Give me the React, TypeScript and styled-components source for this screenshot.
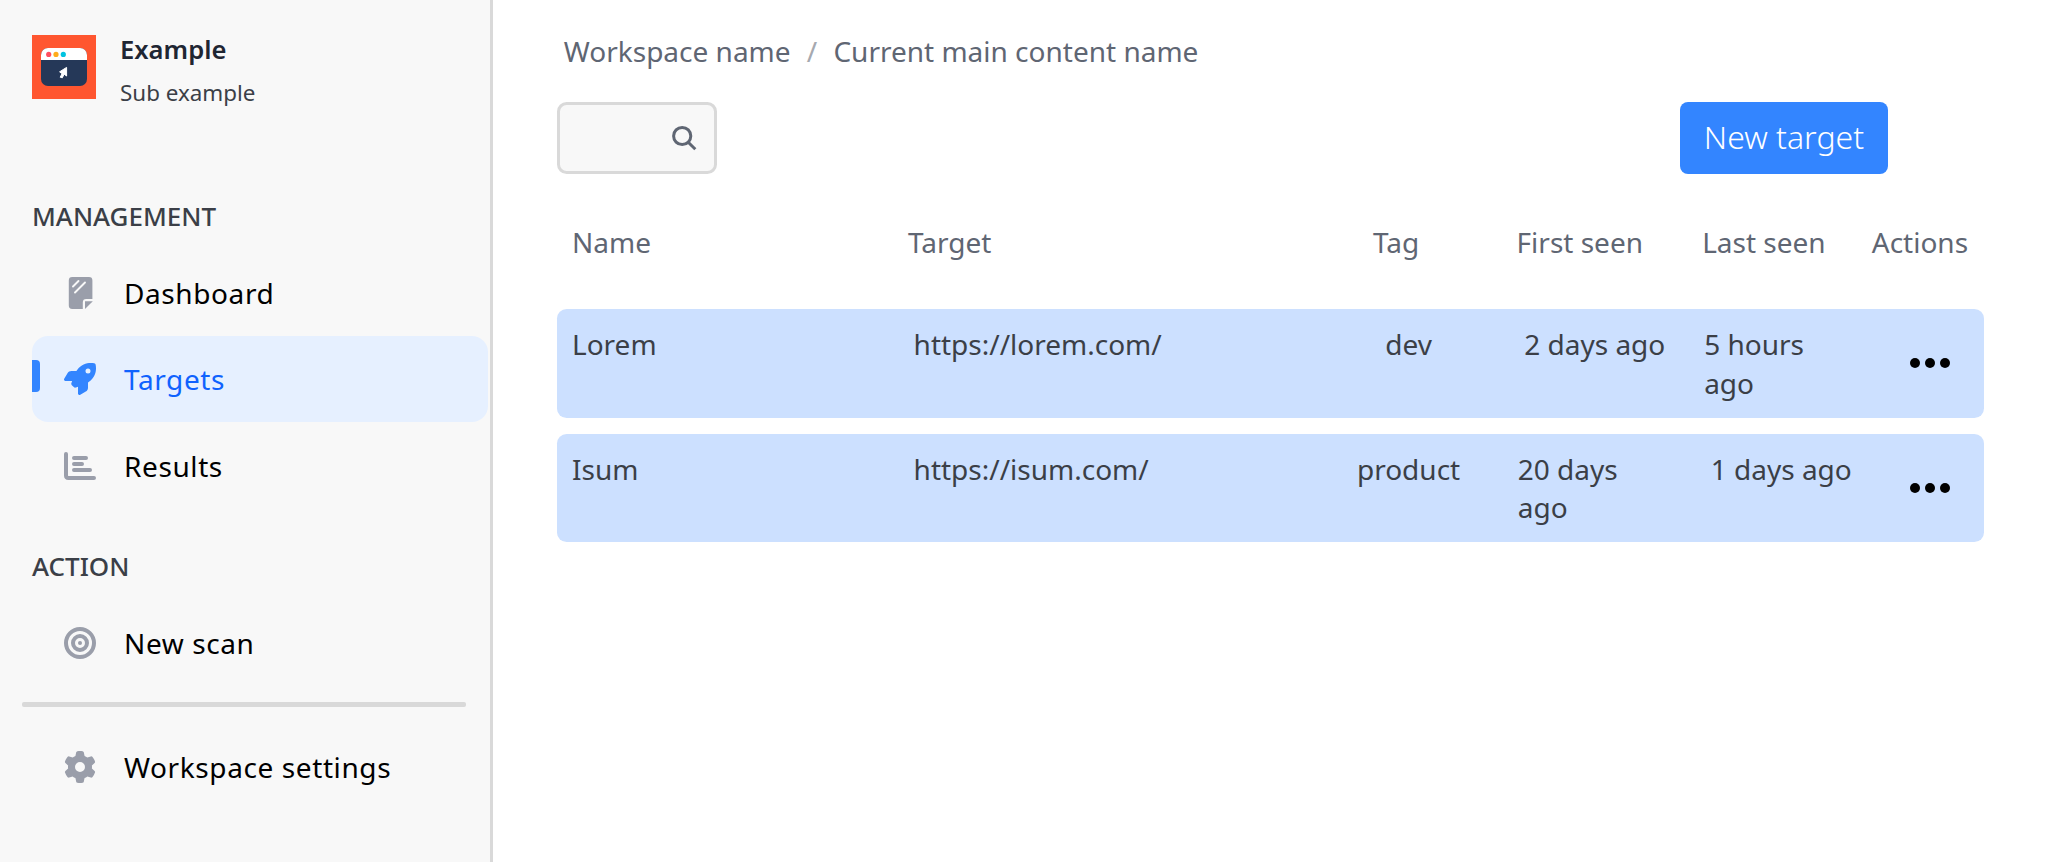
import React from "react";
import styled, { createGlobalStyle, css } from "styled-components";
import { FaRocket, FaGear } from "react-icons/fa6";

const GlobalStyle = createGlobalStyle`
  *, *::before, *::after { box-sizing: border-box; }
  body {
    margin: 0;
    background: #fff;
    font-family: "Noto Sans", sans-serif;
    overflow: hidden;
  }
`;

const Page = styled.div`
  display: flex;
  width: 100%;
  height: 100vh;
  background: #fff;
`;

const Sidebar = styled.aside`
  display: flex;
  flex-direction: column;
  flex: none;
  width: 492.8px;
  padding-top: 35.2px;
  background: #f8f8f8;
  border-right: 3.2px solid #d9d9d9;
`;

const Brand = styled.header`
  display: flex;
  gap: 24px;
  height: 123.2px;
  padding-left: 32px;
`;

const BrandText = styled.div`
  padding-top: 0;
`;

const BrandName = styled.div`
  font-size: 25.6px;
  line-height: 30px;
  font-weight: 600;
  color: #1f2633;
`;

const BrandSub = styled.div`
  margin-top: 13px;
  font-size: 22.4px;
  line-height: 30px;
  color: #3b3f47;
`;

const SectionTitle = styled.h2`
  display: flex;
  align-items: center;
  height: 91.2px;
  margin: 0;
  padding: 24.9px 0 0 32px;
  font-size: 26px;
  line-height: 35px;
  font-weight: 500;
  color: #3b3f47;
`;

const NavItem = styled.a<{ $active?: boolean }>`
  display: flex;
  align-items: center;
  gap: 28px;
  height: 86.4px;
  margin: 0 1.6px 0 32px;
  padding-left: 32px;
  border-radius: 16px;
  font-size: 28px;
  letter-spacing: 0.6px;
  color: #000;
  svg { flex: none; color: #9a9eaa; }
  ${(p) =>
    p.$active &&
    css`
      padding-left: 0;
      background: #e6f0ff;
      color: #0f62fe;
      svg { color: #3385ff; }
    `}
`;

const ActiveMark = styled.span`
  width: 8px;
  height: 32px;
  margin: 0 -4px 6px 0;
  border-radius: 0 4px 4px 0;
  background: #3385ff;
`;

const Divider = styled.hr`
  width: 443.2px;
  height: 5px;
  margin: 15.6px 0 16.8px 22.4px;
  border: 0;
  border-radius: 2px;
  background: #d9d9d9;
`;

const Main = styled.main`
  flex: 1;
  padding: 32px 64px 0 64px;
`;

const Breadcrumb = styled.nav`
  display: flex;
  gap: 16.2px;
  padding-left: 7px;
  font-size: 28px;
  line-height: 39.2px;
  color: #5f6673;
`;

const Slash = styled.span`
  color: #a6a9b0;
`;

const Toolbar = styled.div`
  display: flex;
  justify-content: space-between;
  margin-top: 31.2px;
  padding-right: 96px;
`;

const SearchBox = styled.div`
  display: flex;
  align-items: center;
  justify-content: flex-end;
  width: 160px;
  height: 72px;
  padding: 0 16.6px 0 0;
  border: 3.2px solid #d9d9d9;
  border-radius: 9.6px;
  background: #f8f8f8;
  color: #5f6673;
`;

const PrimaryButton = styled.button`
  width: 208px;
  height: 72px;
  padding: 0 0 2.6px;
  border: 0;
  border-radius: 8px;
  background: #3385ff;
  color: #fff;
  font: 300 32px/43.6px "Noto Sans", sans-serif;
`;

const HeaderRow = styled.div`
  display: grid;
  grid-template-columns: 336px 465px 143.6px 185.6px 169.6px auto;
  margin-top: 48.2px;
  padding-left: 15.2px;
  height: 86.2px;
  font-size: 28px;
  line-height: 39.2px;
  color: #5f6673;
`;

const TableRow = styled.div`
  display: grid;
  grid-template-columns: 341.6px 417px 156px 31.2px 154px 32.4px 154.2px 50.4px auto;
  height: 108.8px;
  margin-bottom: 16px;
  padding: 16px 0 0 15.2px;
  border-radius: 9.6px;
  background: #cce0ff;
  font-size: 28px;
  line-height: 38.8px;
  color: #3b3f47;
`;

const Cell = styled.div<{ $column?: number; $centered?: boolean }>`
  grid-column: ${(p) => p.$column ?? "auto"};
  display: flex;
  justify-content: ${(p) => (p.$centered ? "center" : "flex-start")};
`;

const MenuCell = styled.div`
  grid-column: 9;
  height: 76.8px;
  display: flex;
  align-items: center;
`;

const Logo = () => (
  <svg width="64" height="64" viewBox="0 0 64 64">
    <rect width="64" height="64" fill="#ff5630" />
    <rect x="9" y="13" width="46" height="38" rx="7" fill="#253858" />
    <path d="M9 25V20a7 7 0 0 1 7-7H48a7 7 0 0 1 7 7V25Z" fill="#fff" />
    <circle cx="16.7" cy="19.4" r="2.6" fill="#ff4f5e" />
    <circle cx="24" cy="19.4" r="2.6" fill="#ffab1a" />
    <circle cx="31.3" cy="19.4" r="2.6" fill="#00c3e0" />
    <path
      d="M34.6 32.4 27.6 36.8 29.5 38.4 30.2 38.4 28.2 42.2 30.3 42.8 32.1 39.2 34.6 41Z"
      fill="#fff"
      stroke="#fff"
      strokeWidth="1"
      strokeLinejoin="round"
    />
  </svg>
);

const DashboardIcon = () => (
  <svg width="32" height="32" viewBox="0 0 32 32">
    <path
      d="M8 0H25a3.4 3.4 0 0 1 3.4 3.4V22H22.2a3.4 3.4 0 0 0-3.4 3.4V32H8.2A3.4 3.4 0 0 1 4.8 28.6V3.4A3.4 3.4 0 0 1 8.2 0Z"
      fill="currentColor"
    />
    <path d="M21 24.2H28.8L21 32Z" fill="currentColor" />
    <path d="M9 9.5 14.5 4M11 15.5 21 5.5" stroke="#f8f8f8" strokeWidth="1.9" strokeLinecap="round" />
  </svg>
);

const ResultsIcon = () => (
  <svg width="32" height="32" viewBox="0 0 32 32" fill="none" stroke="currentColor" strokeWidth="4" strokeLinecap="round">
    <path d="M2 4V25.6Q2 28 4.4 28H30" />
    <path d="M10 8H22M10 14H18M10 20H26" />
  </svg>
);

const ScanIcon = () => (
  <svg width="32" height="32" viewBox="0 0 32 32" fill="none" stroke="currentColor" strokeWidth="4">
    <circle cx="16" cy="16" r="14" />
    <circle cx="16" cy="16" r="7" />
    <circle cx="16" cy="16" r="2" fill="currentColor" stroke="none" />
  </svg>
);

const SearchIcon = () => (
  <svg width="26" height="26" viewBox="0 0 26 26" fill="none" stroke="currentColor" strokeWidth="3">
    <circle cx="11.2" cy="11" r="8.6" />
    <path d="M17 17 24.3 24.3" />
  </svg>
);

const MoreIcon = () => (
  <svg width="42" height="12" viewBox="0 0 42 12">
    <circle cx="6" cy="6" r="5" />
    <circle cx="21" cy="6" r="5" />
    <circle cx="36" cy="6" r="5" />
  </svg>
);

const targets = [
  { name: "Lorem", url: "https://lorem.com/", tag: "dev", first: "2 days ago", last: "5 hours ago" },
  { name: "Isum", url: "https://isum.com/", tag: "product", first: "20 days ago", last: "1 days ago" },
];

export default function App() {
  return (
    <>
      <GlobalStyle />
      <Page>
        <Sidebar>
          <Brand>
            <Logo />
            <BrandText>
              <BrandName>Example</BrandName>
              <BrandSub>Sub example</BrandSub>
            </BrandText>
          </Brand>
          <SectionTitle>MANAGEMENT</SectionTitle>
          <NavItem>
            <DashboardIcon />
            <span>Dashboard</span>
          </NavItem>
          <NavItem $active>
            <ActiveMark />
            <FaRocket size={32} />
            <span>Targets</span>
          </NavItem>
          <NavItem>
            <ResultsIcon />
            <span>Results</span>
          </NavItem>
          <SectionTitle>ACTION</SectionTitle>
          <NavItem>
            <ScanIcon />
            <span>New scan</span>
          </NavItem>
          <Divider />
          <NavItem>
            <FaGear size={32} />
            <span>Workspace settings</span>
          </NavItem>
        </Sidebar>
        <Main>
          <Breadcrumb>
            <span>Workspace name</span>
            <Slash>/</Slash>
            <span>Current main content name</span>
          </Breadcrumb>
          <Toolbar>
            <SearchBox>
              <SearchIcon />
            </SearchBox>
            <PrimaryButton>New target</PrimaryButton>
          </Toolbar>
          <HeaderRow>
            <span>Name</span>
            <span>Target</span>
            <span>Tag</span>
            <span>First seen</span>
            <span>Last seen</span>
            <span>Actions</span>
          </HeaderRow>
          {targets.map((t) => (
            <TableRow key={t.name}>
              <Cell>{t.name}</Cell>
              <Cell>{t.url}</Cell>
              <Cell $column={3} $centered>{t.tag}</Cell>
              <Cell $column={5} $centered>{t.first}</Cell>
              <Cell $column={7} $centered>{t.last}</Cell>
              <MenuCell>
                <MoreIcon />
              </MenuCell>
            </TableRow>
          ))}
        </Main>
      </Page>
    </>
  );
}
